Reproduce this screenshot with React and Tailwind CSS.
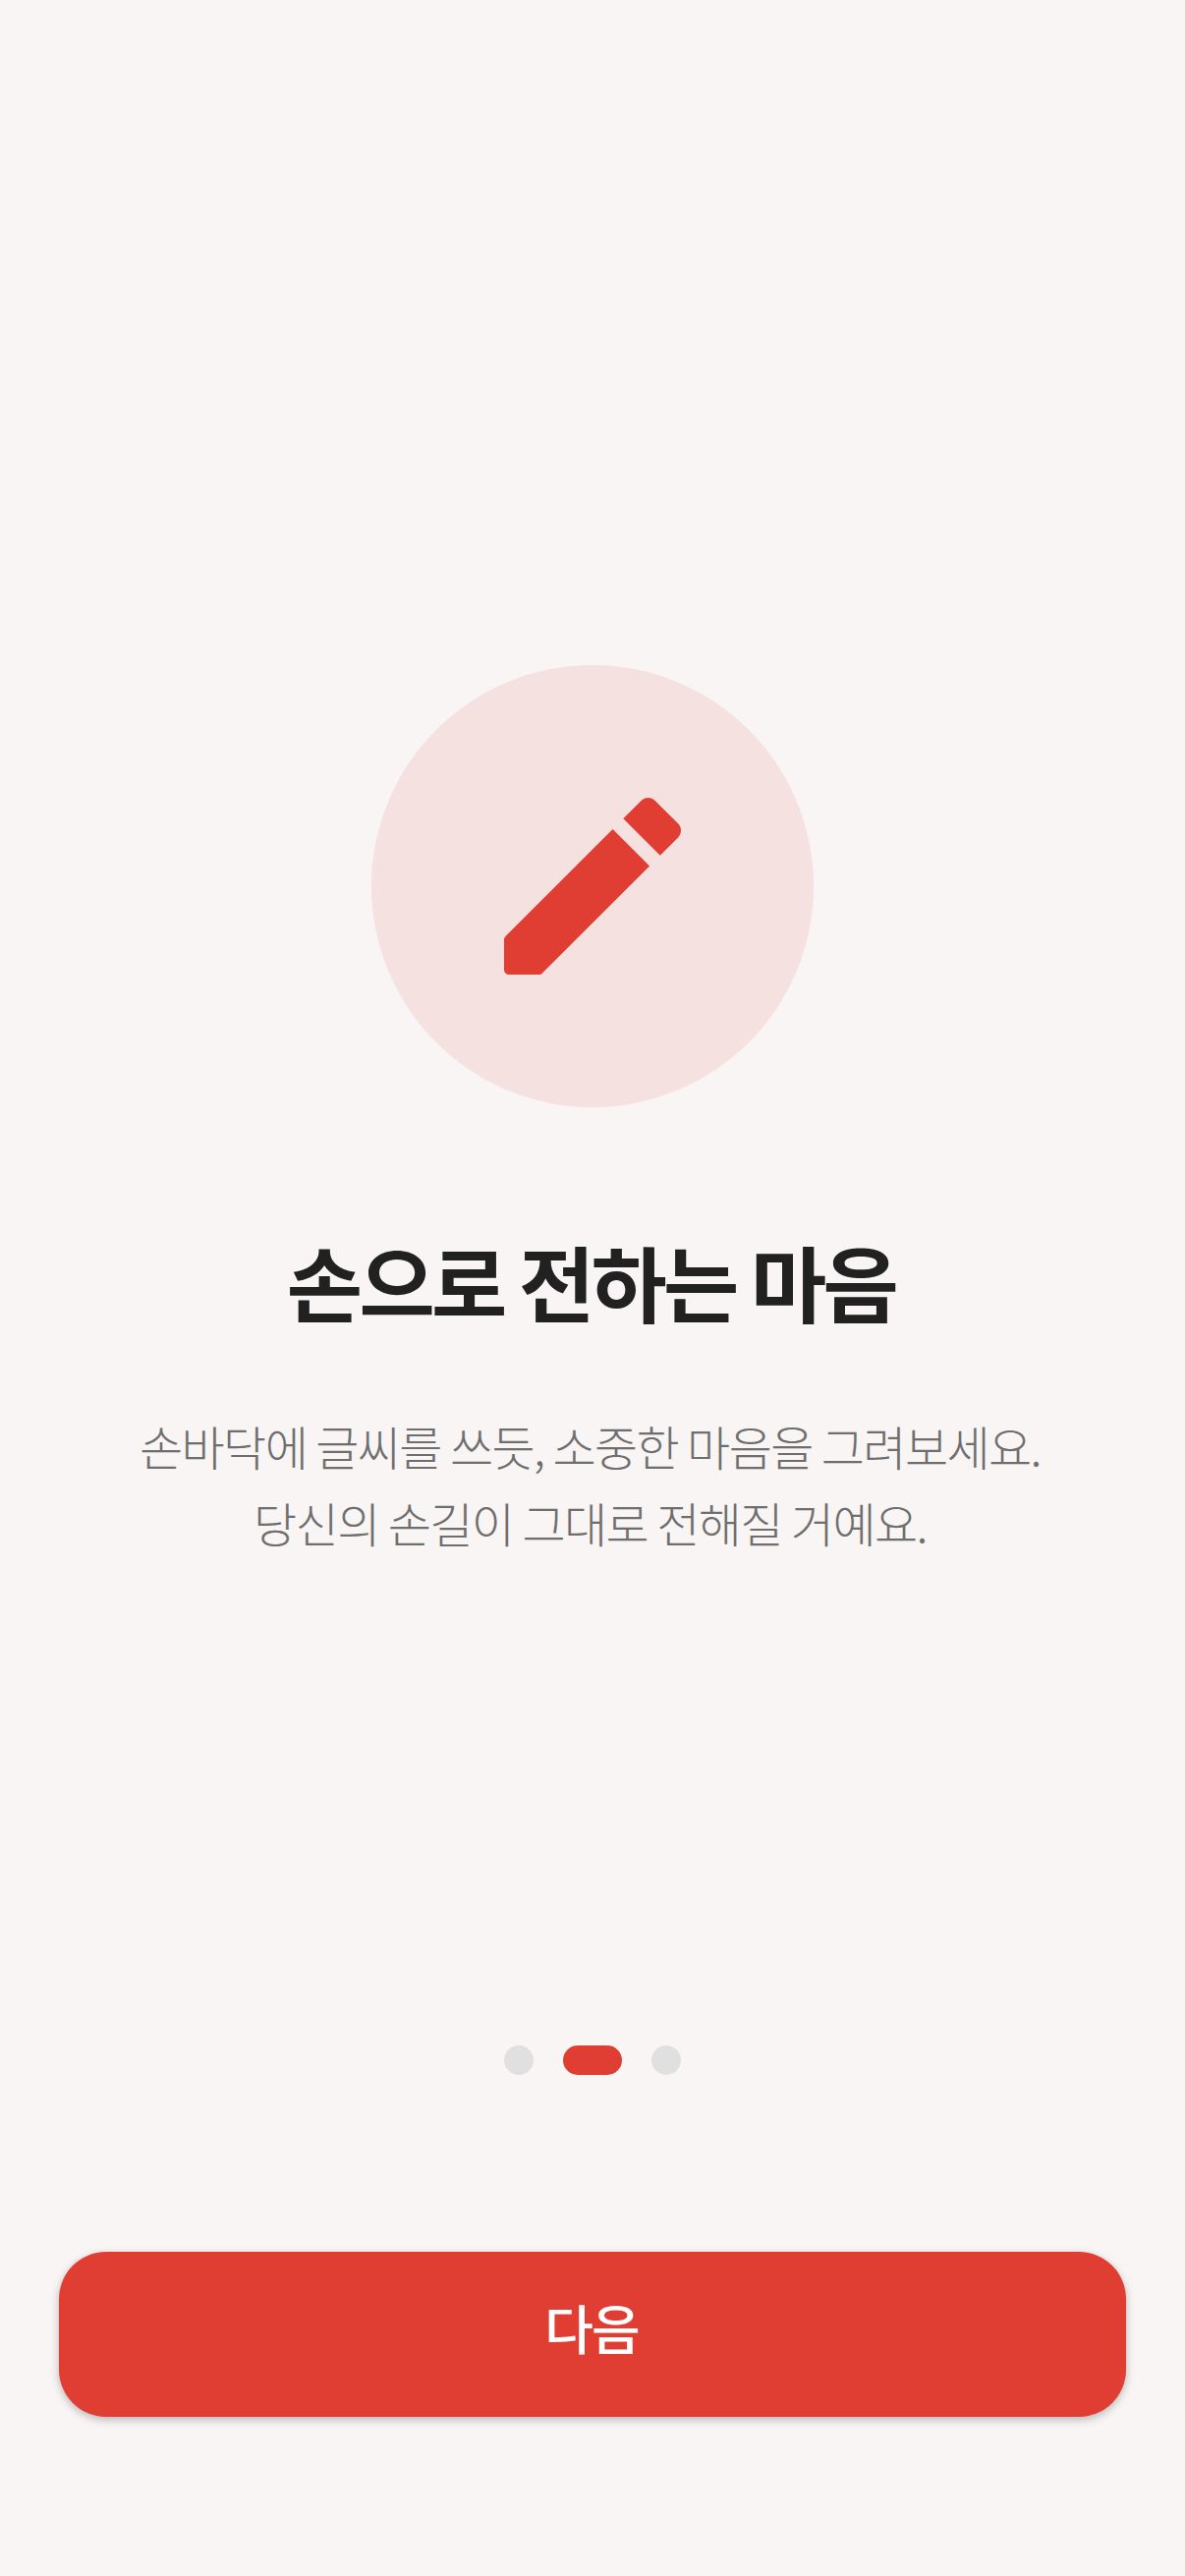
const dots = [false, true, false];

const App = () => {
  return (
    <div className="min-h-[2622px] bg-[#f8f5f4] flex flex-col items-center font-['Noto_Sans_CJK_KR','Noto_Sans',sans-serif]">
      <div className="mt-[677px] w-[450px] h-[450px] rounded-full bg-[#f5e1e0] flex items-center justify-center">
        <svg viewBox="0 0 24 24" className="w-[240px] h-[240px] fill-[#e03e32]">
          <path d="M3 17.46v3.04c0 .28.22.5.5.5h3.04c.13 0 .26-.05.35-.15L17.81 9.94l-3.75-3.75L3.15 17.1c-.1.1-.15.22-.15.36zM20.71 7.04c.39-.39.39-1.02 0-1.41l-2.34-2.34c-.39-.39-1.02-.39-1.41 0l-1.83 1.83 3.75 3.75 1.83-1.83z" />
        </svg>
      </div>

      <h1 className="mt-[121px] pr-[3px] text-[84px] leading-[112px] font-bold tracking-[-3.7px] text-[#212121]">
        손으로 전하는 마음
      </h1>

      <p className="mt-[72px] pr-[5px] text-center text-[48px] leading-[78px] font-light tracking-[-1.6px] text-[#6e6e6e]">
        손바닥에 글씨를 쓰듯, 소중한 마음을 그려보세요.
        <br />
        당신의 손길이 그대로 전해질 거예요.
      </p>

      <div className="mt-[494px] flex items-center gap-[30px]">
        {dots.map((active, i) => (
          <div
            key={i}
            className={
              active
                ? "w-[60px] h-[30px] rounded-full bg-[#e03e32]"
                : "w-[30px] h-[30px] rounded-full bg-[#e0e0e0]"
            }
          />
        ))}
      </div>

      <button className="mt-[180px] w-[1086px] h-[168px] pb-[16px] pr-[2px] rounded-[48px] bg-[#e03e32] text-white text-[54px] font-medium tracking-[-2px] shadow-[0_3px_9px_rgba(0,0,0,0.25)]">
        다음
      </button>
    </div>
  );
};

export default App;
